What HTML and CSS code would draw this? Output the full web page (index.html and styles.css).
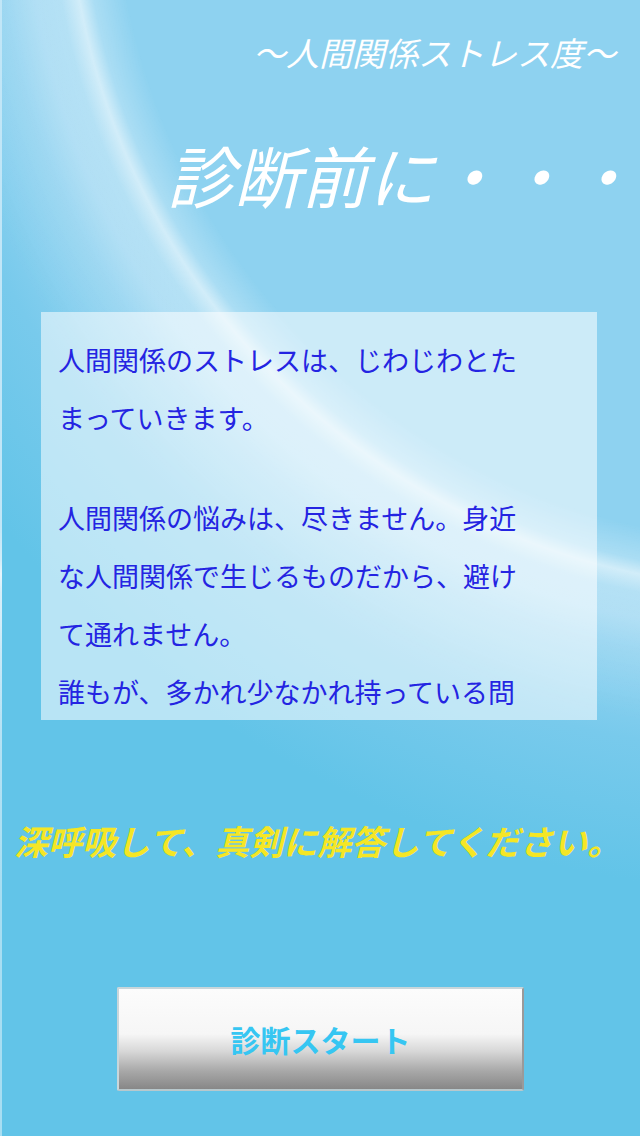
FILE: index.html
```html
<!DOCTYPE html>
<html lang="ja">
<head>
    <meta charset="UTF-8">
    <meta name="viewport" content="width=device-width, initial-scale=1.0">
    <title>人間関係ストレス度</title>
    <link rel="stylesheet" href="styles.css">
</head>
<body>
    <div class="screen">
        <p class="subtitle">～人間関係ストレス度～</p>
        <h1 class="heading">診断前に・・・</h1>
        <div class="intro-box">
            <p>人間関係のストレスは、じわじわとたまっていきます。</p>
            <p>人間関係の悩みは、尽きません。身近な人間関係で生じるものだから、避けて通れません。<br>誰もが、多かれ少なかれ持っている問題です。</p>
        </div>
        <p class="notice">深呼吸して、真剣に解答してください。</p>
        <button class="start-button" onclick="window.location.href='question.html'">診断スタート</button>
    </div>
</body>
</html>
```

FILE: styles.css
```css
body {
    margin: 0;
    font-family: "Noto Sans CJK JP", "Noto Sans", sans-serif;
    background: #62c4e8;
}
.screen {
    width: 640px;
    height: 1136px;
    box-sizing: border-box;
    border-left: 2px solid rgba(255, 255, 255, 0.45);
    overflow: hidden;
    display: flex;
    flex-direction: column;
    /* curved light streak over the sky gradient */
    background:
        radial-gradient(circle at 783px -128px,
            rgba(255, 255, 255, 0) 0,
            rgba(255, 255, 255, 0) 670px,
            rgba(255, 255, 255, 0.25) 703px,
            rgba(255, 255, 255, 0.6) 717px,
            rgba(255, 255, 255, 0.3) 735px,
            rgba(255, 255, 255, 0.1) 790px,
            rgba(255, 255, 255, 0) 860px),
        radial-gradient(circle at 783px -128px,
            #8ed2f0 0,
            #8ed2f0 717px,
            #9dd7f2 760px,
            #78caec 880px,
            #62c4e8 1020px);
}
.subtitle {
    margin: 31px 0 0;
    padding-right: 24px;
    text-align: right;
    font-size: 33px;
    line-height: 42px;
    font-style: italic;
    color: #fff;
}
.heading {
    margin: 61px 0 0;
    padding-right: 4px;
    text-align: right;
    font-size: 67px;
    line-height: 80px;
    font-weight: normal;
    font-style: italic;
    color: #fff;
}
.intro-box {
    margin: 98px 0 0 39px;
    width: 556px;
    height: 408px;
    box-sizing: border-box;
    padding: 19px 0 0 17px;
    background: rgba(255, 255, 255, 0.55);
    overflow: hidden;
}
.intro-box p {
    width: 462px;
    margin: 0 0 42px;
    font-size: 27px;
    line-height: 58px;
    color: #2424e2;
}
.notice {
    margin: 99px 0 0;
    padding-left: 12px;
    font-size: 34px;
    line-height: 44px;
    font-style: italic;
    font-weight: bold;
    color: #f5e625;
}
.start-button {
    margin: 124px 0 0 115px;
    width: 407px;
    height: 104px;
    border: 2px solid #c9d6da;
    border-right-color: #9a9a9a;
    border-bottom-color: #b8c8cc;
    border-radius: 2px;
    background: linear-gradient(#fcfcfc 0%, #f6f6f6 45%, #d8d8d8 62%, #a8a8a8 82%, #878787 100%);
    font-family: inherit;
    font-size: 30px;
    font-weight: bold;
    color: #36c6f2;
    cursor: pointer;
}
```
